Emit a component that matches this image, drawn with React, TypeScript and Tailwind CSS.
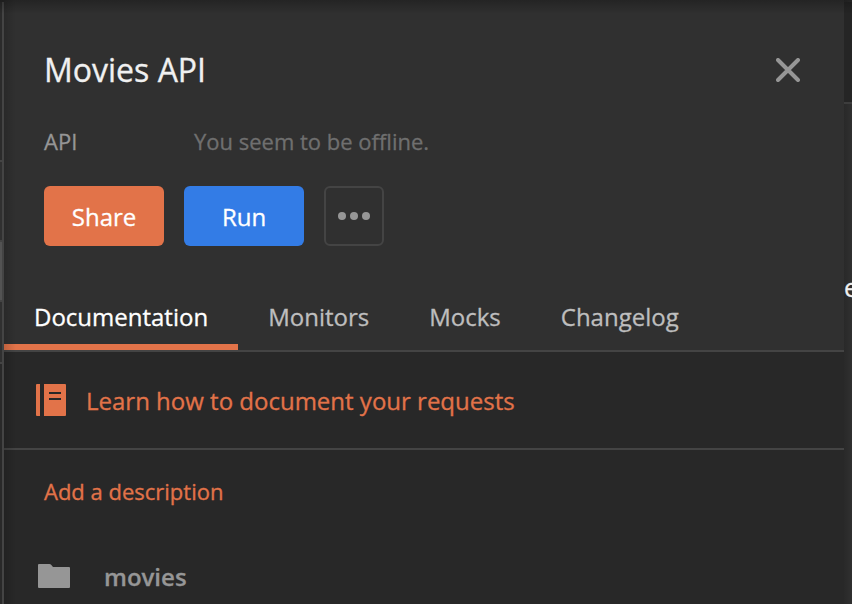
import type { ReactNode } from 'react';

function LeftRail() {
  return (
    <div className="mt-0.5 flex w-0.5 shrink-0 flex-col bg-[#292929]">
      <div className="h-[158px] shrink-0 bg-[#2b2b2b]" />
      <div className="h-0.5 shrink-0 bg-[#444444]" />
      <div className="h-[78px] shrink-0 bg-[#303030]" />
      <div className="h-0.5 shrink-0 bg-[#444444]" />
      <div className="h-[58px] shrink-0 bg-[#535353]" />
      <div className="h-0.5 shrink-0 bg-[#444444]" />
      <div className="h-[60px] shrink-0 bg-[#303030]" />
      <div className="h-0.5 shrink-0 bg-[#444444]" />
    </div>
  );
}

function RightRail() {
  return (
    <div className="flex w-2 shrink-0 flex-col overflow-hidden bg-gradient-to-r from-[#292929] to-[#303030] pt-0.5">
      <div className="h-[100px] shrink-0 bg-[#252525]" />
      <div className="h-0.5 shrink-0 bg-[#3d3d3d]" />
      <span className="mt-[167px] text-[25px] leading-8 text-[#f0f0f0]">e</span>
    </div>
  );
}

function Tab({ active, children }: { active?: boolean; children: ReactNode }) {
  return (
    <button
      className={
        active
          ? 'h-16 border-b-[6px] border-[#e27349] px-[30px] pt-1 text-white'
          : 'h-16 border-b-[6px] border-transparent px-[30px] pt-1 text-[#bebebe]'
      }
    >
      {children}
    </button>
  );
}

function CloseIcon() {
  return (
    <svg width="24" height="24" viewBox="0 0 24 24" stroke="#969696" strokeWidth="4" strokeLinecap="round">
      <path d="M2 2 22 22M22 2 2 22" />
    </svg>
  );
}

function BookIcon() {
  return (
    <svg width="30" height="32" viewBox="0 0 30 32" className="shrink-0">
      <path d="M1 0h3v32H1a1 1 0 0 1-1-1V1a1 1 0 0 1 1-1Z" fill="#e27349" />
      <path d="M8 0h21a1 1 0 0 1 1 1v30a1 1 0 0 1-1 1H8Z" fill="#e27349" />
      <path d="M13 8h12v2H13ZM13 14h12v2H13Z" fill="#282828" />
    </svg>
  );
}

function FolderIcon() {
  return (
    <svg width="32" height="24" viewBox="0 0 32 24" fill="#969696" className="shrink-0">
      <path d="M1 0h10.5a2 2 0 0 1 1.4.6L15 3h16a1 1 0 0 1 1 1v19a1 1 0 0 1-1 1H1a1 1 0 0 1-1-1V1a1 1 0 0 1 1-1Z" />
    </svg>
  );
}

export default function App() {
  return (
    <div className="relative flex h-[604px] w-[852px] overflow-hidden bg-[#282828] font-['Open_Sans',sans-serif] [-webkit-text-stroke:0.3px]">
      <LeftRail />
      <div className="mt-0.5 w-0.5 shrink-0 bg-[#444444]" />
      <main className="relative flex w-[840px] shrink-0 flex-col bg-[#282828]">
        <header className="flex h-[352px] shrink-0 flex-col border-b-2 border-[#444444] bg-[#303030]">
          <div className="mt-[50px] flex h-10 items-center justify-between pl-10 pr-11">
            <h1 className="text-[32px] leading-10 text-[#f0f0f0]">Movies API</h1>
            <button aria-label="Close">
              <CloseIcon />
            </button>
          </div>
          <div className="mt-[35px] flex h-8 items-center pl-10 text-[22px] leading-8">
            <span className="w-[150px] text-[#969696]">API</span>
            <span className="text-[#6f6f6f]">You seem to be offline.</span>
          </div>
          <div className="mt-[29px] flex gap-5 pl-10 text-[24px] text-white">
            <button className="h-[60px] w-[120px] rounded-md bg-[#e27349] pt-0.5">Share</button>
            <button className="h-[60px] w-[120px] rounded-md bg-[#337ce6] pt-0.5">Run</button>
            <button
              aria-label="More actions"
              className="flex size-[60px] items-center justify-center gap-1 rounded-md border-2 border-[#444444]"
            >
              <i className="size-2 rounded-full bg-[#969696]" />
              <i className="size-2 rounded-full bg-[#969696]" />
              <i className="size-2 rounded-full bg-[#969696]" />
            </button>
          </div>
          <nav className="mt-10 flex text-[24px]">
            <Tab active>Documentation</Tab>
            <Tab>Monitors</Tab>
            <Tab>Mocks</Tab>
            <Tab>Changelog</Tab>
          </nav>
        </header>
        <a className="flex h-[98px] shrink-0 items-center gap-5 border-b-2 border-[#444444] pl-8 text-[24px] text-[#e27349]">
          <BookIcon />
          <span className="pt-0.5">Learn how to document your requests</span>
        </a>
        <a className="ml-10 mt-[25px] text-[22px] leading-8 text-[#e27349]">Add a description</a>
        <div className="mt-[51px] flex h-9 items-center gap-[34px] pl-[34px] text-[24px] font-semibold text-[#969696]">
          <FolderIcon />
          <span className="pt-0.5">movies</span>
        </div>
        <div className="pointer-events-none absolute inset-y-0 left-0 w-3 bg-gradient-to-r from-black/15 to-transparent" />
      </main>
      <RightRail />
      <div className="pointer-events-none absolute inset-x-0 top-0 h-3.5 bg-gradient-to-b from-black/25 to-transparent" />
    </div>
  );
}
